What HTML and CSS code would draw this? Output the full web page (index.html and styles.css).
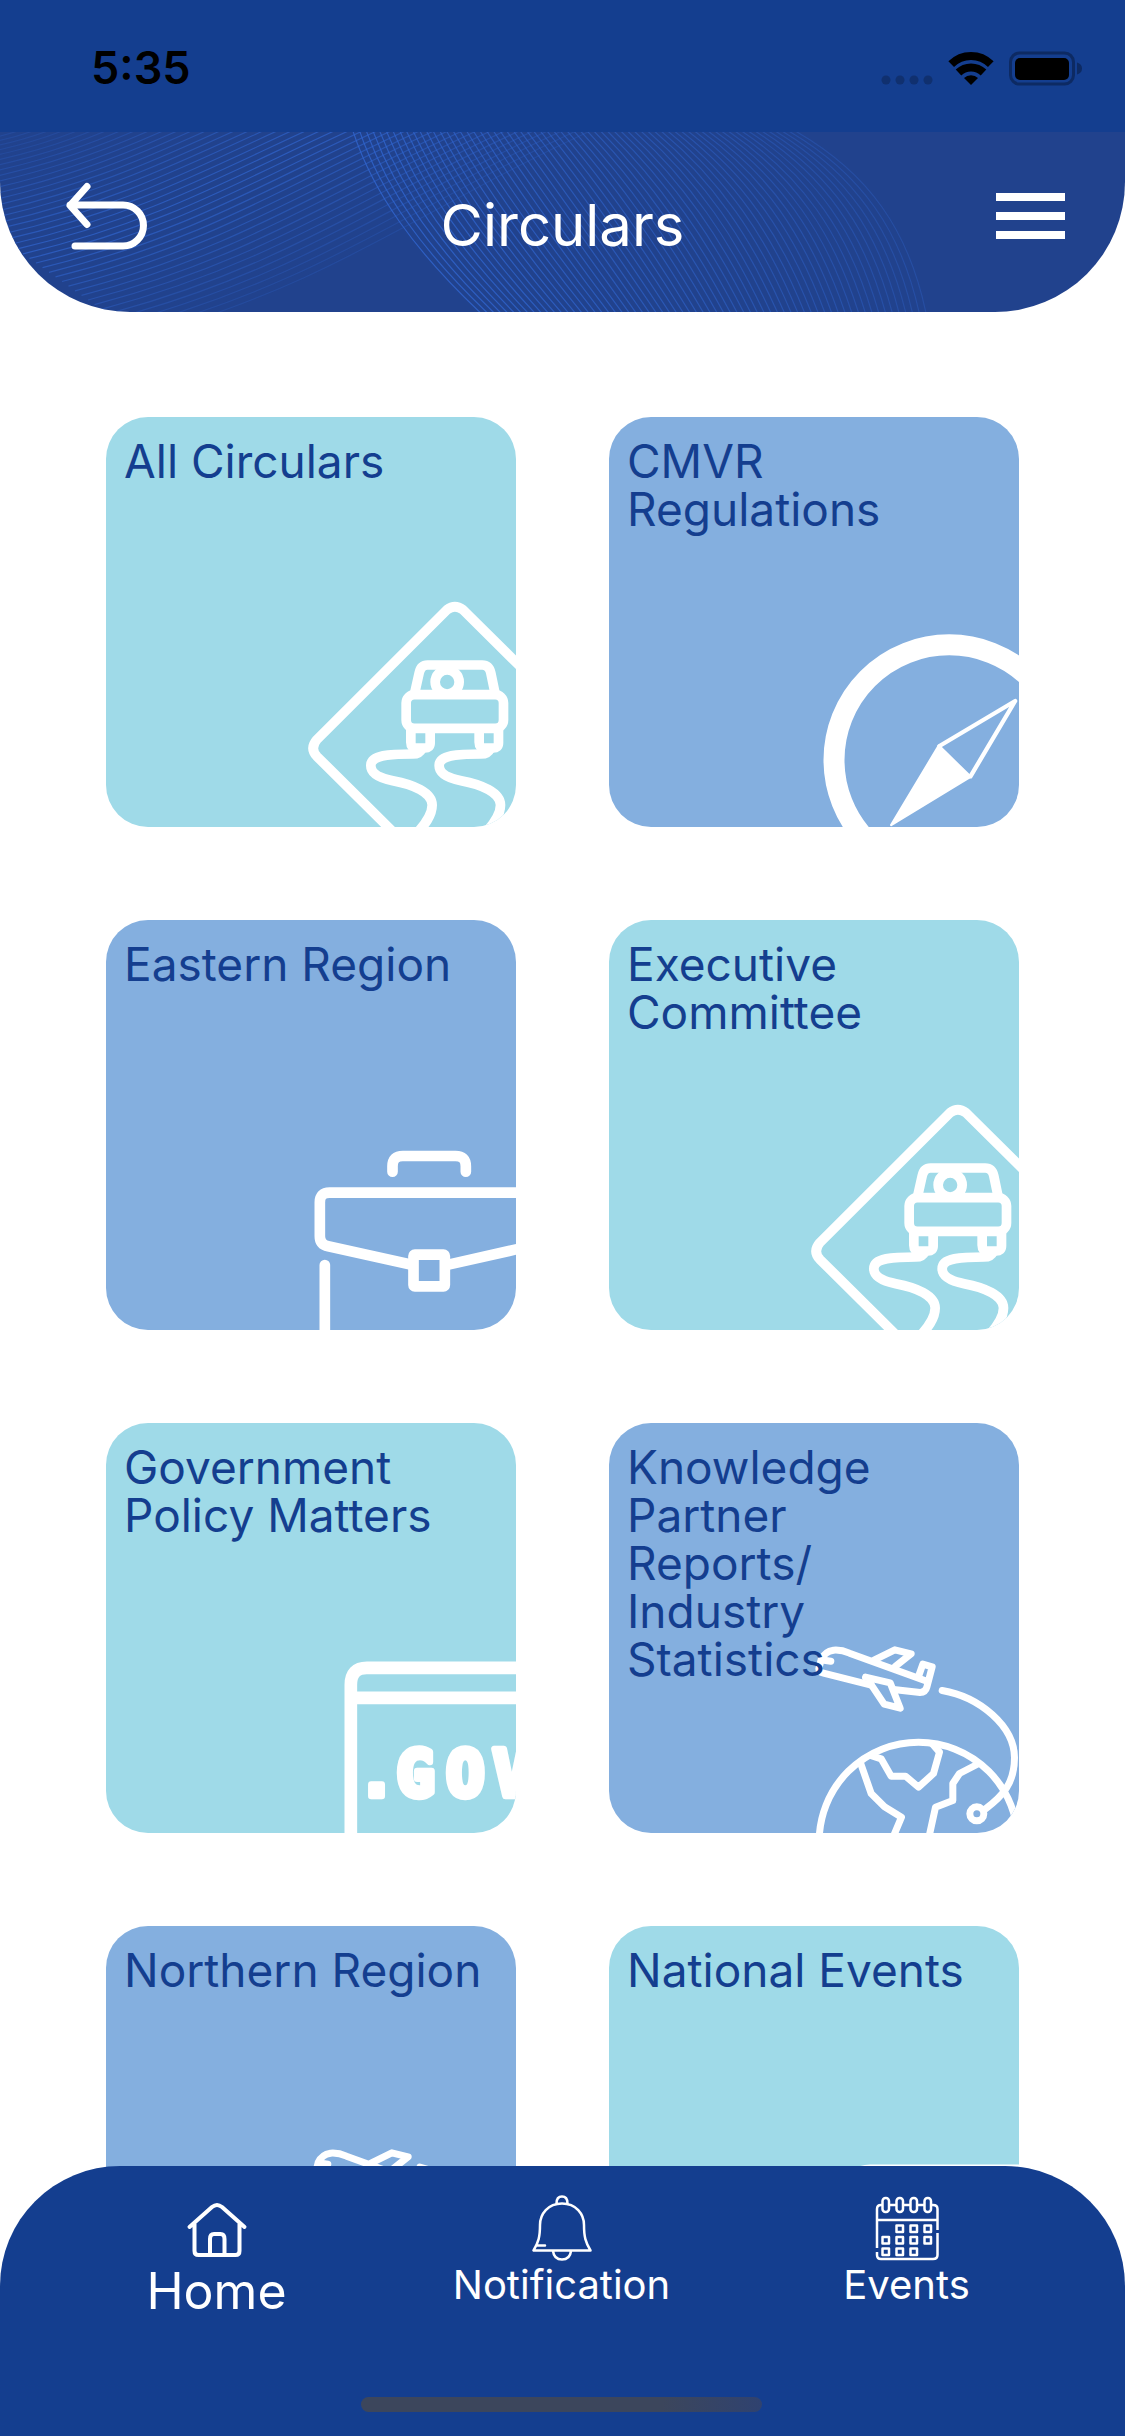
FILE: index.html
```html
<!DOCTYPE html>
<html lang="en">
<head>
<meta charset="utf-8">
<meta name="viewport" content="width=device-width, initial-scale=1">
<title>Circulars</title>
<link rel="stylesheet" href="styles.css">
</head>
<body>
<svg class="sprite" aria-hidden="true">
  <symbol id="art-road" viewBox="0 0 410 410">
    <g transform="translate(183.5 162) scale(.33333)" fill="none" stroke="#fff" stroke-width="29">
      <path d="M710 280 520 92Q496 74 473 92L82 482Q60 508 82 532L330 778"/>
      <path d="M376 340 389 282Q394 258 414 258H578Q599 258 604 282L616 340"/>
      <circle cx="473" cy="309" r="36"/>
      <rect x="350" y="347" width="292" height="101" rx="25"/>
      <path d="M364 450V490Q364 507 380 507H406Q422 507 422 492V450"/>
      <path d="M569 450V490Q569 507 585 507H611Q627 507 627 492V450"/>
      <path d="M398 508Q390 525 370 525C300 525 244 528 244 560 244 588 285 600 310 605 370 616 428 640 428 678 428 710 405 738 380 765"/>
      <path d="M603 508Q595 525 575 525C505 525 449 528 449 560 449 588 490 600 515 605 575 616 633 640 633 678 633 710 610 738 585 765"/>
    </g>
  </symbol>
  <symbol id="art-compass" viewBox="0 0 410 410">
    <g transform="translate(-19.5 -18) scale(.33333)" fill="none" stroke="#fff" stroke-linejoin="round" stroke-linecap="round">
      <circle cx="1079" cy="1083" r="345.500" stroke-width="63"/>
      <path d="M1050 1041 1277 906 1143 1132" stroke-width="13"/>
      <path d="M1048 1040 1143 1133 905 1278Z" fill="#fff" stroke-width="7"/>
    </g>
  </symbol>
  <symbol id="art-case" viewBox="0 0 410 410">
    <g transform="translate(183.5 199) scale(.33333)" fill="none" stroke="#fff" stroke-width="32" stroke-linecap="round">
      <path d="M309 158V142Q309 111 340 111H498Q529 111 529 142V158"/>
      <path d="M720 221H120Q91 221 91 250V352Q91 377 116 382L360 436M480 436 720 382"/>
      <rect x="372" y="407" width="94" height="95" rx="4"/>
      <path d="M106 438V700"/>
    </g>
  </symbol>
  <symbol id="art-gov" viewBox="0 0 410 410">
    <g transform="translate(223.5 216.5) scale(.33333)" fill="none" stroke="#fff" stroke-width="38">
      <path d="M64 640V136Q64 85 112 85H620M64 175H620"/>
      <text class="gov-text" x="84 201 350 490" y="470">.GOV</text>
    </g>
  </symbol>
  <symbol id="art-travel" viewBox="0 0 410 410">
    <g transform="translate(180.5 196.5) scale(.33333)" fill="none" stroke="#fff" stroke-width="21" stroke-linecap="round" stroke-linejoin="round">
      <path d="M408 184 180 101Q155 90 132 92 106 96 95 120L88 148Q88 158 102 161L245 197"/>
      <path d="M104 122 124 125"/>
      <path d="M388 168 400 134 428 142 412 203Q408 219 392 219L312 210"/>
      <path d="M255 121 316 91 365 103 318 140"/>
      <path d="M228 173 302 190 332 266 284 254 240 188"/>
      <path d="M458 213C570 232 675 320 675 415 675 490 640 530 588 568"/>
      <circle cx="562" cy="583" r="21"/>
      <circle cx="387" cy="666" r="298"/>
      <path d="M213 430 245 522 285 562 336 593 312 650"/>
      <path d="M243 408 275 418 305 470H348L387 503 432 462 450 398 430 375"/>
      <path d="M568 432 510 462 490 492V543L438 563 419 650"/>
    </g>
  </symbol>
</svg>

<div class="app">
  <div class="status">
    <span class="clock">5:35</span>
    <svg class="indicators" viewBox="880 50 203 37" aria-hidden="true">
      <g fill="#10306f">
        <circle cx="886" cy="80" r="4.500"/><circle cx="900" cy="80" r="4.500"/><circle cx="914" cy="80" r="4.500"/><circle cx="928" cy="80" r="4.500"/>
      </g>
      <g fill="none" stroke="#000" stroke-width="8">
        <path d="M951.200 64.200A28 28 0 0 1 990.800 64.200M958.500 72.500A18 18 0 0 1 983.500 72.500"/>
      </g>
      <path d="M971 85 964 78A10 10 0 0 1 978 78Z"/>
      <rect x="1010.500" y="53" width="63" height="31" rx="9" fill="none" stroke="#0d2a63" stroke-width="3"/>
      <rect x="1015" y="58" width="54" height="22" rx="5"/>
      <path d="M1077 62.500Q1082 64 1082 68.500T1077 74.500Z" fill="#0d2a63"/>
    </svg>
  </div>

  <header class="header">
    <svg class="waves" id="waves" viewBox="0 0 1125 180" preserveAspectRatio="none" aria-hidden="true"></svg>
    <button class="icon-button" type="button" aria-label="Back">
      <svg width="82" height="68" viewBox="66 181 82 68" fill="none" stroke="#fff" stroke-width="7" stroke-linecap="round" stroke-linejoin="round" aria-hidden="true">
        <path d="M87 185.500 70 204.500 87 223.500M70 204H123A20.500 20.500 0 0 1 123 245H75"/>
      </svg>
    </button>
    <h1 class="title">Circulars</h1>
    <button class="icon-button icon-button-end" type="button" aria-label="Menu">
      <svg width="69" height="46" viewBox="0 0 69 46" fill="none" stroke="#fff" stroke-width="8" aria-hidden="true">
        <path d="M0 4H69M0 23H69M0 42H69"/>
      </svg>
    </button>
  </header>

  <main class="content">
    <div class="cards">
      <a class="card card-aqua" href="#"><svg class="art" aria-hidden="true"><use href="#art-road"/></svg><span class="label">All Circulars</span></a>
      <a class="card card-blue" href="#"><svg class="art" aria-hidden="true"><use href="#art-compass"/></svg><span class="label">CMVR<br>Regulations</span></a>
      <a class="card card-blue" href="#"><svg class="art" aria-hidden="true"><use href="#art-case"/></svg><span class="label">Eastern Region</span></a>
      <a class="card card-aqua" href="#"><svg class="art" aria-hidden="true"><use href="#art-road"/></svg><span class="label">Executive<br>Committee</span></a>
      <a class="card card-aqua" href="#"><svg class="art" aria-hidden="true"><use href="#art-gov"/></svg><span class="label">Government<br>Policy Matters</span></a>
      <a class="card card-blue" href="#"><svg class="art" aria-hidden="true"><use href="#art-travel"/></svg><span class="label">Knowledge<br>Partner<br>Reports/<br>Industry<br>Statistics</span></a>
      <a class="card card-blue" href="#"><svg class="art" aria-hidden="true"><use href="#art-travel"/></svg><span class="label">Northern Region</span></a>
      <a class="card card-aqua" href="#"><svg class="art" aria-hidden="true"><use href="#art-gov"/></svg><span class="label">National Events</span></a>
    </div>
  </main>

  <nav class="tabbar" aria-label="Main">
    <div class="tabs">
      <a class="tab tab-active" href="#">
        <svg width="64" height="66" viewBox="0 0 64 66" fill="none" stroke="#fff" stroke-width="4" stroke-linecap="round" stroke-linejoin="round" aria-hidden="true">
          <path d="M4.500 32 27 12Q32 8 37 12L59.500 32M9.500 29V56Q9.500 60 13.500 60H50.500Q54.500 60 54.500 56V29M25 60V44Q25 39 29 39H35.500Q39.500 39 39.500 44V60"/>
        </svg>
        Home
      </a>
      <a class="tab" href="#">
        <svg width="64" height="66" viewBox="0 0 64 66" fill="none" stroke="#fff" stroke-width="2.500" stroke-linecap="round" stroke-linejoin="round" aria-hidden="true">
          <path d="M32 8.500C18 8.500 10 19 10 30 10 42 8.500 47 3.500 55.500H60.500C55.500 47 54 42 54 30 54 19 46 8.500 32 8.500ZM26.500 8.500Q26.500 1.500 32 1.500T37.500 8.500M23 56Q24 64.500 32 64.500T41 56M6 50.500H15"/>
        </svg>
        Notification
      </a>
      <a class="tab" href="#">
        <svg width="64" height="66" viewBox="0 0 64 66" fill="none" stroke="#fff" stroke-width="2.500" stroke-linejoin="round" aria-hidden="true">
          <path d="M7.500 10H6Q2 10 2 14V53M14 10H21.500M28 10H35.500M42 10H49.500M56 10H58Q62.500 10 62.500 14V35M62.500 38V60Q62.500 64 58 64H6Q2 64 2 60V57M2 25H62.500"/>
          <rect x="7.500" y="3" width="6.500" height="14" rx="3"/><rect x="21.500" y="3" width="6.500" height="14" rx="3"/><rect x="35.500" y="3" width="6.500" height="14" rx="3"/><rect x="49.500" y="3" width="6.500" height="14" rx="3"/>
          <path d="M21.500 30.500H28V37H21.500ZM35.500 30.500H42V37H35.500ZM49.500 30.500H56V37H49.500ZM7.500 42H14V48.500H7.500ZM21.500 42H28V48.500H21.500ZM35.500 42H42V48.500H35.500ZM49.500 42H56V48.500H49.500ZM7.500 53.500H14V60H7.500ZM21.500 53.500H28V60H21.500ZM35.500 53.500H42V60H35.500Z"/>
        </svg>
        Events
      </a>
    </div>
    <div class="home-indicator"></div>
  </nav>
</div>
<script src="waves.js"></script>
</body>
</html>
```
FILE: styles.css
```css
* {
  box-sizing: border-box;
}

body {
  margin: 0;
  background: #fff;
  font-family: Inter, "Liberation Sans", sans-serif;
}

.sprite {
  display: none;
}

.gov-text {
  fill: #fff;
  stroke-width: 20px;
  stroke-linejoin: round;
  font: bold 190px "DejaVu Sans Mono", monospace;
}

.app {
  display: flex;
  flex-direction: column;
  height: 100vh;
  overflow: hidden;
}

.status {
  display: flex;
  flex: none;
  align-items: center;
  justify-content: space-between;
  height: 132px;
  padding: 4px 42px 0 91px;
  background: #143e8f;
}

.clock {
  font-size: 45px;
  font-weight: 600;
  line-height: 48px;
}

.indicators {
  width: 203px;
  height: 37px;
}

.header {
  display: grid;
  flex: none;
  grid-template-columns: 1fr auto 1fr;
  align-items: center;
  height: 180px;
  overflow: hidden;
  background: #21428d;
  border-radius: 0 0 130px 130px;
}

.waves {
  grid-area: 1 / 1 / 2 / 4;
  width: 100%;
  height: 180px;
}

.icon-button {
  grid-area: 1 / 1;
  justify-self: start;
  padding: 0 0 12px;
  margin: 0 60px 0 66px;
  background: none;
  border: 0;
}

.icon-button svg {
  display: block;
}

.icon-button-end {
  grid-area: 1 / 3;
  justify-self: end;
}

.title {
  grid-area: 1 / 2;
  margin: 0;
  padding-top: 6px;
  color: #fff;
  font-size: 58px;
  font-weight: 400;
  line-height: 64px;
}

.content {
  flex: 1;
  min-height: 0;
  padding: 105px 106px 0;
  overflow-y: auto;
  scrollbar-width: none;
}

.cards {
  display: grid;
  grid-template-columns: 1fr 1fr;
  gap: 93px;
  padding-bottom: 220px;
}

.card {
  display: grid;
  aspect-ratio: 1;
  overflow: hidden;
  color: #143e8f;
  text-decoration: none;
  border-radius: 42px;
}

.card-aqua {
  background: #9fdae8;
}

.card-blue {
  background: #84afdf;
}

.art {
  grid-area: 1 / 1;
  width: 100%;
  height: 100%;
}

.label {
  grid-area: 1 / 1;
  padding: 20px 16px 0 18px;
  font-size: 46px;
  font-weight: 400;
  line-height: 48px;
}

.tabbar {
  display: flex;
  flex: none;
  flex-direction: column;
  gap: 76px;
  align-items: center;
  margin-top: -120px;
  padding: 29px 46px 24px 44px;
  background: #143e8f;
  border-radius: 120px 120px 0 0;
  z-index: 1;
}

.tabs {
  display: grid;
  grid-template-columns: repeat(3, 1fr);
  width: 100%;
}

.tab {
  display: flex;
  flex-direction: column;
  align-items: center;
  color: #fff;
  font-size: 40px;
  line-height: 48px;
  text-decoration: none;
}

.tab-active {
  font-size: 50px;
  line-height: 60px;
}

.home-indicator {
  width: 401px;
  height: 15px;
  background: linear-gradient(100deg, #3c465c 75%, #2f4270);
  border-radius: 8px;
}
```
FILE: waves.js
```js
// Draws each band of header lines by blending one Bezier curve into another.
const svg = document.getElementById('waves');

function band(from, to, count, opacityAt) {
  for (let i = 0; i <= count; i++) {
    const t = i / count;
    const p = from.map((v, k) => (v + (to[k] - v) * t).toFixed(1));
    const path = document.createElementNS('http://www.w3.org/2000/svg', 'path');
    path.setAttribute('d', `M${p[0]} ${p[1]}C${p.slice(2).join(' ')}`);
    path.setAttribute('fill', 'none');
    path.setAttribute('stroke', '#3064cc');
    path.setAttribute('stroke-width', '1.2');
    path.setAttribute('opacity', opacityAt(t).toFixed(2));
    svg.appendChild(path);
  }
}

band([-120, 20, -60, 15, 0, 10, 40, -10], [140, 205, 340, 150, 430, 70, 610, -10], 40,
  t => 0.25 + 0.5 * Math.max(0, 1 - Math.abs(t - 0.55) * 2.2));
band([352, -4, 372, 60, 415, 120, 486, 186], [790, -4, 870, 40, 910, 100, 927, 186], 66,
  t => 0.85 - 0.5 * t);
```
